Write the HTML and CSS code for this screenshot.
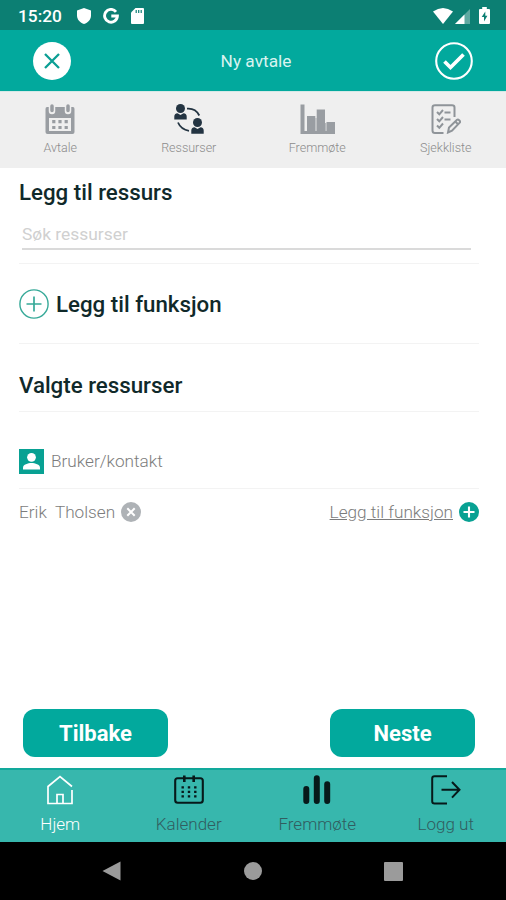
FILE: index.html
```html
<!DOCTYPE html>
<html lang="no">

<head>
    <meta charset="UTF-8">
    <meta name="viewport" content="width=device-width, initial-scale=1.0">
    <title>Ny avtale</title>
    <link rel="stylesheet" href="styles.css">
</head>

<body>
    <!-- Status bar -->
    <div class="status">
        <span class="clock">15:20</span>
        <svg class="shield" width="14" height="16" viewBox="0 0 14 16"><path d="M7 0L14 2.5V7.5C14 11.5 11 14.8 7 16C3 14.8 0 11.5 0 7.5V2.5Z" fill="#fff"/></svg>
        <svg class="google" width="16" height="16" viewBox="0 0 16 16"><path d="M13 3.8A6.4 6.4 0 1 0 14.4 8H8.3" fill="none" stroke="#fff" stroke-width="2.9"/></svg>
        <svg class="sdcard" width="13" height="16" viewBox="0 0 13 16"><path d="M4.5 0H12Q13 0 13 1V15Q13 16 12 16H1Q0 16 0 15V4.5Z" fill="#fff"/><path d="M5.2 2V5M7.7 2V5M10.2 2V5" stroke="#0c7f73" stroke-width="1.2"/></svg>
        <svg class="wifi" width="20" height="16" viewBox="0 0 20 16"><path d="M0 3.5Q10 -3.5 20 3.5L10 16Z" fill="#fff"/></svg>
        <svg class="signal" width="15" height="15" viewBox="0 0 15 15"><path d="M15 0V15H0Z" fill="#5fa9a1"/><path d="M9.5 5.5V15H0Z" fill="#fff"/></svg>
        <svg class="battery" width="11" height="17" viewBox="0 0 11 17"><path d="M3.2 0H7.8V2H10Q11 2 11 3V16Q11 17 10 17H1Q0 17 0 16V3Q0 2 1 2H3.2Z" fill="#fff"/><path d="M6.3 4.5L2.7 10H5V14.5L8.4 8.8H6.3Z" fill="#0c7f73"/></svg>
    </div>

    <!-- Header -->
    <div class="header">
        <svg width="38" height="38" viewBox="0 0 38 38"><circle cx="19" cy="19" r="19" fill="#fff"/><path d="M12 12L26 26M26 12L12 26" stroke="#0b9f94" stroke-width="2.3"/></svg>
        <h1>Ny avtale</h1>
        <svg width="38" height="38" viewBox="0 0 38 38"><circle cx="19" cy="19" r="17.8" fill="none" stroke="#fff" stroke-width="2.1"/><path d="M9.5 19.5L15.5 25.5L28.5 12.5" fill="none" stroke="#fff" stroke-width="3.7"/></svg>
    </div>

    <!-- Steps for the new appointment -->
    <div class="tabs">
        <div class="tab">
            <svg width="30" height="30" viewBox="0 0 30 30">
                <path fill-rule="evenodd" fill="#999da2" d="M2 3H28Q29.5 3 29.5 5V28Q29.5 30 27.5 30H2.5Q.5 30 .5 28V5Q.5 3 2 3ZM4 14V27H26V14Z"/>
                <path d="M7 3V7M23 3V7" stroke="#efefef" stroke-width="6.5" stroke-linecap="round"/>
                <path d="M7 2V6.5M23 2V6.5" stroke="#999da2" stroke-width="3.5" stroke-linecap="round"/>
                <path d="M7.2 17.7H10.4M13.4 17.7H16.6M19.6 17.7H22.8M7.2 23.5H10.4M13.4 23.5H16.6M19.6 23.5H22.8" stroke="#999da2" stroke-width="3.2"/>
            </svg>
            <span>Avtale</span>
        </div>
        <div class="tab">
            <svg width="30" height="30" viewBox="0 0 30 30">
                <g fill="#233442">
                    <circle cx="6.5" cy="4.5" r="4.5"/>
                    <path d="M.3 15.5V12.5Q.3 9.5 3.5 9.2L6.5 11L9.5 9.2Q12.7 9.5 12.7 12.5V15.5Z"/>
                    <circle cx="23.5" cy="18.5" r="4.5"/>
                    <path d="M17.3 29.7V26.5Q17.3 23.5 20.5 23.2L23.5 25L26.5 23.2Q29.7 23.5 29.7 26.5V29.7Z"/>
                </g>
                <path d="M13 4.7Q21.5 4 25.3 11.5M4 18.5Q7 25.5 15 26.8" fill="none" stroke="#233442" stroke-width="1.8"/>
            </svg>
            <span>Ressurser</span>
        </div>
        <div class="tab">
            <svg width="35" height="30" viewBox="0 0 35 30"><path d="M.5 .5H4.5V27H7V12H15.3V27H16.7V5.5H25V27H26.5V18H35V30H.5Z" fill="#999da2"/><path d="M15.3 14H16.7V27H15.3ZM25 19H26.5V27H25Z" fill="#b5b8bb"/></svg>
            <span>Fremmøte</span>
        </div>
        <div class="tab">
            <svg width="30" height="30" viewBox="0 0 30 30" fill="none" stroke="#8f9499" stroke-width="2">
                <path d="M12.5 29H4Q1.5 29 1.5 26.5V3.5Q1.5 1.2 4 1.2H21Q23.5 1.2 23.5 3.5V13"/>
                <path d="M6 8L8.3 10.3L12 6M13.5 8.5H19.5M6 15L8.3 17.3L12 13M13.5 15.5H19.5M6 21.5L8.3 23.8L12 19.5"/>
                <path d="M17 28.5L18 23.5L26 15.7Q27 15 28.2 16.2Q29.7 17.5 28.7 18.7L21 26.7Z" fill="#efefef"/>
                <path d="M24.3 17.5L27 20.2"/>
            </svg>
            <span>Sjekkliste</span>
        </div>
    </div>

    <!-- Resources -->
    <div class="content">
        <h2 class="add-resource">Legg til ressurs</h2>
        <input class="search" type="text" placeholder="Søk ressurser">
        <div class="add-function">
            <svg width="30" height="30" viewBox="0 0 30 30"><circle cx="15" cy="15" r="14.1" fill="none" stroke="#36a998" stroke-width="1.4"/><path d="M15 7.5V22.5M7.5 15H22.5" stroke="#36a998" stroke-width="1.7"/></svg>
            <h2>Legg til funksjon</h2>
        </div>
        <h2 class="chosen">Valgte ressurser</h2>
        <div class="group">
            <svg width="25" height="25" viewBox="0 0 25 25"><rect width="25" height="25" fill="#08a193"/><circle cx="12.5" cy="8.3" r="4.4" fill="#fff"/><path d="M4 20.5V18.5C4 15.5 9 14 12.5 14S21 15.5 21 18.5V20.5Z" fill="#fff"/></svg>
            <span>Bruker/kontakt</span>
        </div>
        <div class="person">
            <span class="name">Erik&nbsp; Tholsen</span>
            <svg width="20" height="20" viewBox="0 0 20 20"><circle cx="10" cy="10" r="10" fill="#aeb2b6"/><path d="M6.3 6.3L13.7 13.7M13.7 6.3L6.3 13.7" stroke="#fff" stroke-width="2"/></svg>
            <span class="link">Legg til funksjon</span>
            <svg width="20" height="20" viewBox="0 0 20 20"><circle cx="10" cy="10" r="10" fill="#08a193"/><path d="M10 4.5V15.5M4.5 10H15.5" stroke="#fff" stroke-width="2.1"/></svg>
        </div>
    </div>

    <div class="buttons">
        <button>Tilbake</button>
        <button>Neste</button>
    </div>

    <!-- Bottom menu -->
    <div class="menu">
        <div class="item active">
            <svg width="30" height="30" viewBox="0 0 30 30" fill="none" stroke="#fff" stroke-width="1.7"><path d="M27 11.5L15 1.5L3 11.5V28.5H27V15M12 28.5V19.5H18V28.5"/></svg>
            <span>Hjem</span>
        </div>
        <div class="item">
            <svg width="30" height="30" viewBox="0 0 30 30" fill="none" stroke="#07191a">
                <rect x="1.2" y="3.2" width="27.6" height="24.6" rx="2.5" stroke-width="2.1"/>
                <path d="M10.3 .5V7M19.7 .5V7" stroke-width="2.6"/>
                <path d="M7.5 12.3H22.5M7.5 16.8H22.5M7.5 21.3H22.5" stroke-width="2.3" stroke-dasharray="2.4 3.9"/>
            </svg>
            <span>Kalender</span>
        </div>
        <div class="item">
            <svg width="30" height="30" viewBox="0 0 30 30"><path d="M4.3 14V26M14.8 3.3V26M25.2 9.3V26" stroke="#07191a" stroke-width="6" stroke-linecap="round"/></svg>
            <span>Fremmøte</span>
        </div>
        <div class="item">
            <svg width="30" height="30" viewBox="0 0 30 30" fill="none" stroke="#07191a" stroke-width="2"><path d="M16 1.2H3.5Q1.2 1.2 1.2 3.5V26.3Q1.2 28.5 3.5 28.5H16M10.5 14.8H28.5M21 7L28.5 14.8L21 22.6"/></svg>
            <span>Logg ut</span>
        </div>
    </div>

    <!-- Android navigation -->
    <div class="system">
        <svg width="19" height="20" viewBox="0 0 19 20"><path d="M18.5 .5V19.5L.5 10Z" fill="#9b9b9b"/></svg>
        <svg width="18" height="18" viewBox="0 0 18 18"><circle cx="9" cy="9" r="9" fill="#9b9b9b"/></svg>
        <svg width="19" height="19" viewBox="0 0 19 19"><rect width="19" height="19" rx="1" fill="#9b9b9b"/></svg>
    </div>
</body>

</html>
```
FILE: styles.css
```css
* {
    box-sizing: border-box;
}

body {
    margin: 0;
    height: 900px;
    display: flex;
    flex-direction: column;
    overflow: hidden;
    background-color: #fff;
    font-family: Roboto, sans-serif;
}

svg {
    display: block;
    flex: none;
}

/* Status bar */
.status {
    height: 30px;
    flex: none;
    display: flex;
    align-items: center;
    padding: 1px 16px 0 18px;
    background-color: #0c7f73;
    color: #fff;
}

.clock {
    width: 59px;
    font-size: 17.3px;
    font-weight: 500;
}

.google {
    margin-left: 12px;
}

.sdcard {
    margin-left: 12px;
}

.wifi {
    margin-left: auto;
}

.signal {
    margin: 1px 9px 0 2px;
}

/* Header */
.header {
    height: 61px;
    flex: none;
    display: flex;
    align-items: center;
    justify-content: space-between;
    padding: 0 33px;
    background-color: #02a99d;
}

.header h1 {
    margin: 0;
    padding-left: 6px;
    color: #d9f3f0;
    font-size: 17.3px;
    font-weight: 400;
}

/* Steps */
.tabs {
    height: 77px;
    flex: none;
    display: grid;
    grid-template-columns: repeat(4, 1fr);
    margin: 0 -4px;
    border-top: 1px solid #d5e9e7;
    background-color: #efefef;
}

.tab,
.item {
    display: flex;
    flex-direction: column;
    align-items: center;
}

.tab {
    padding-top: 12px;
    color: #8c8c8c;
    font-size: 12.5px;
    font-weight: 300;
}

.tab span {
    margin-top: 6px;
    line-height: 15px;
}

/* Resources */
.content {
    flex: 1;
    padding: 0 26px 0 19px;
    color: #7c7c7c;
    font-size: 17.2px;
    font-weight: 300;
}

.content h2 {
    margin: 0;
    color: #10292a;
    font-size: 22.3px;
    font-weight: 500;
    line-height: 26px;
}

.content .add-resource {
    padding-top: 11px;
}

.search {
    display: block;
    width: 449px;
    height: 32px;
    margin: 13px 0 13px 3px;
    padding: 2px 0 0;
    border: none;
    border-bottom: 2px solid #dadada;
    background: none;
    font-family: Roboto, sans-serif;
    font-size: 17.4px;
    font-weight: 400;
}

.search::placeholder {
    color: #d0d0d0;
}

.add-function {
    height: 81px;
    display: flex;
    align-items: center;
    gap: 7px;
    border-top: 1px solid #f3f3f3;
    border-bottom: 1px solid #f3f3f3;
}

.add-function h2 {
    padding-top: 1px;
}

.content .chosen {
    height: 68px;
    padding-top: 28px;
    border-bottom: 1px solid #f3f3f3;
}

.group {
    height: 77px;
    display: flex;
    align-items: flex-end;
    gap: 7px;
    padding-bottom: 14px;
    border-bottom: 1px solid #f3f3f3;
}

.group span {
    line-height: 25px;
}

.person {
    height: 46px;
    display: flex;
    align-items: center;
}

.name {
    margin-right: 6px;
}

.link {
    margin-left: auto;
    margin-right: 6px;
    text-decoration: underline;
}

.add-function,
.content .chosen,
.group,
.person {
    width: 460px;
}

/* Buttons */
.buttons {
    flex: none;
    display: flex;
    justify-content: space-between;
    padding: 0 31px 11px 23px;
}

.buttons button {
    width: 145px;
    height: 48px;
    padding: 0;
    border: none;
    border-radius: 12px;
    background-color: #02a99d;
    color: #fff;
    font-family: Roboto, sans-serif;
    font-size: 22px;
    font-weight: 700;
}

/* Bottom menu */
.menu {
    height: 74px;
    flex: none;
    display: grid;
    grid-template-columns: repeat(4, 1fr);
    margin: 0 -4px;
    border-top: 2px solid #12a99c;
    background-color: #37b7ad;
}

.item {
    padding-top: 5px;
    color: #315d60;
    font-size: 17px;
    font-weight: 300;
}

.item span {
    margin-top: 9px;
    line-height: 20px;
}

.active {
    color: #fff;
}

/* Android navigation */
.system {
    height: 58px;
    flex: none;
    display: flex;
    align-items: center;
    justify-content: space-between;
    padding: 0 103px 0 102px;
    background-color: #000;
}
```
